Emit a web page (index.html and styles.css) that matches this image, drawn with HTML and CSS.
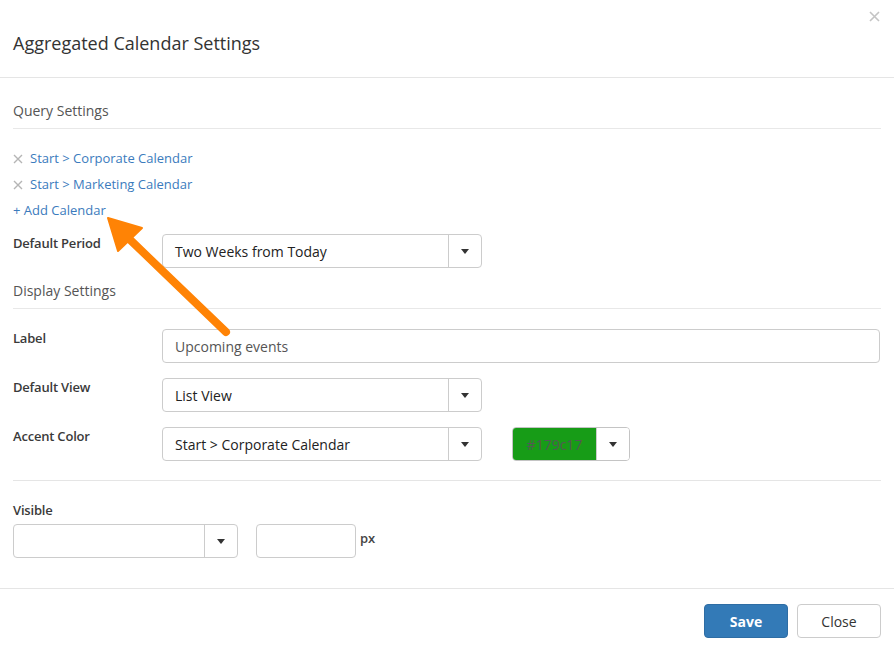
FILE: index.html
```html
<!DOCTYPE html>
<html>
<head>
<meta charset="utf-8">
<link rel="stylesheet" href="styles.css">
</head>
<body>
<div class="modal">
  <div class="modal-header">
    <svg class="close-x" width="11" height="11" viewBox="0 0 11 11"><path d="M1 1L10 10M10 1L1 10" stroke="#c4c4c4" stroke-width="1.6"/></svg>
    <h4 class="title">Aggregated Calendar Settings</h4>
  </div>
  <div class="modal-body">
    <div class="section-title">Query Settings</div>
    <ul class="cal-list">
      <li><svg class="remove" width="10" height="10" viewBox="0 0 10 10"><path d="M1 1L9 9M9 1L1 9" stroke="#b5b5b5" stroke-width="1.4"/></svg><a class="link">Start &gt; Corporate Calendar</a></li>
      <li><svg class="remove" width="10" height="10" viewBox="0 0 10 10"><path d="M1 1L9 9M9 1L1 9" stroke="#b5b5b5" stroke-width="1.4"/></svg><a class="link">Start &gt; Marketing Calendar</a></li>
      <li><a class="link">+ Add Calendar</a></li>
    </ul>
    <div class="row row-period">
      <label class="lbl">Default Period</label>
      <div class="select w320"><span class="sel-text">Two Weeks from Today</span><span class="sel-btn"><i class="caret"></i></span></div>
    </div>
    <div class="section-title st2">Display Settings</div>
    <div class="row row-first">
      <label class="lbl">Label</label>
      <div class="input grow"><span class="inp-text">Upcoming events</span></div>
    </div>
    <div class="row">
      <label class="lbl">Default View</label>
      <div class="select w320"><span class="sel-text">List View</span><span class="sel-btn"><i class="caret"></i></span></div>
    </div>
    <div class="row">
      <label class="lbl">Accent Color</label>
      <div class="select w320"><span class="sel-text">Start &gt; Corporate Calendar</span><span class="sel-btn"><i class="caret"></i></span></div>
      <div class="color-pick"><span class="swatch">#179c17</span><span class="sel-btn"><i class="caret"></i></span></div>
    </div>
    <div class="divider"></div>
    <label class="lbl lbl-vis">Visible</label>
    <div class="vis-row">
      <div class="select w225"><span class="sel-text"></span><span class="sel-btn"><i class="caret"></i></span></div>
      <div class="input w100"></div>
      <span class="px">px</span>
    </div>
  </div>
  <div class="modal-footer">
    <button class="btn btn-primary">Save</button>
    <button class="btn btn-default">Close</button>
  </div>
</div>
<svg class="arrow" width="894" height="649" viewBox="0 0 894 649">
  <line x1="226" y1="332" x2="122" y2="232" stroke="#ff8305" stroke-width="8" stroke-linecap="round"/>
  <polygon points="108,218 142,228 118,251" fill="#ff8305" stroke="#ff8305" stroke-width="2" stroke-linejoin="round"/>
</svg>
</body>
</html>
```
FILE: styles.css
```css
* { box-sizing: border-box; }
html, body { margin: 0; padding: 0; background: #fff; }
body { font-family: "Open Sans", "Liberation Sans", sans-serif; color: #333; font-size: 13px; position: relative; width: 894px; height: 649px; overflow: hidden; }

.modal { width: 894px; }

.modal-header { position: relative; height: 78px; padding: 30px 13px 0; border-bottom: 1px solid #e5e5e5; }
.title { margin: 0; font-size: 18px; font-weight: 400; line-height: 27px; color: #333; }
.close-x { position: absolute; right: 14px; top: 11px; display: block; }

.modal-body { padding: 0 13px; }

.section-title { padding: 23px 0 7px; line-height: 20px; font-size: 14px; color: #555; border-bottom: 1px solid #e8e8e8; }
.st2 { padding-top: 13px; }

.cal-list { list-style: none; margin: 16px 0 0; padding: 0; }
.cal-list li { line-height: 26px; height: 26px; display: flex; align-items: center; }
.remove { display: block; margin-right: 7px; margin-top: 2px; flex-shrink: 0; }
.link { color: #3b7bbd; font-size: 13px; }

.row { display: flex; align-items: flex-start; margin-top: 15px; }
.row-period { margin-top: 11px; }
.row-first { margin-top: 20px; }

.lbl { display: block; width: 149px; flex-shrink: 0; padding-top: 0; line-height: 18px; font-size: 13px; font-weight: 600; color: #3a3a3a; letter-spacing: -0.2px; }

.select { display: flex; height: 34px; border: 1px solid #ccc; border-radius: 4px; background: #fff; }
.w320 { width: 320px; }
.w225 { width: 225px; }
.sel-text { flex: 1; padding: 2px 0 0 12px; font-size: 14px; line-height: 30px; color: #222; white-space: nowrap; overflow: hidden; }
.sel-btn { width: 33px; flex-shrink: 0; border-left: 1px solid #ccc; display: flex; align-items: center; justify-content: center; }
.caret { display: block; width: 0; height: 0; border-left: 4.5px solid transparent; border-right: 4.5px solid transparent; border-top: 5px solid #333; }

.input { height: 34px; border: 1px solid #ccc; border-radius: 4px; background: #fff; }
.grow { flex: 1; margin-right: 1px; }
.w100 { width: 100px; margin-left: 18px; }
.inp-text { display: block; padding: 2px 0 0 12px; font-size: 14px; line-height: 30px; color: #555; }

.color-pick { display: flex; margin-left: 30px; height: 34px; width: 118px; border: 1px solid #c4c4c4; border-radius: 4px; overflow: hidden; }
.swatch { width: 84px; background: #179c17; color: #535a53; font-size: 14px; padding-top: 2px; line-height: 30px; text-align: center; }
.color-pick .sel-btn { background: #fff; }

.divider { margin-top: 19px; border-top: 1px solid #e5e5e5; }
.lbl-vis { margin-top: 20px; }
.vis-row { display: flex; align-items: flex-start; margin-top: 5px; }
.px { margin-left: 4px; font-size: 13px; font-weight: 600; line-height: 29px; color: #444; }

.modal-footer { margin-top: 30px; border-top: 1px solid #e5e5e5; padding: 15px 13px; display: flex; justify-content: flex-end; gap: 9px; }
.btn { width: 84px; height: 34px; border-radius: 4px; font-family: "Open Sans", "Liberation Sans", sans-serif; font-size: 14px; cursor: pointer; }
.btn-primary { background: #337ab7; border: 1px solid #2e6da4; color: #fff; font-weight: 700; }
.btn-default { background: #fff; border: 1px solid #ccc; color: #333; }

.arrow { position: absolute; left: 0; top: 0; pointer-events: none; }
```
